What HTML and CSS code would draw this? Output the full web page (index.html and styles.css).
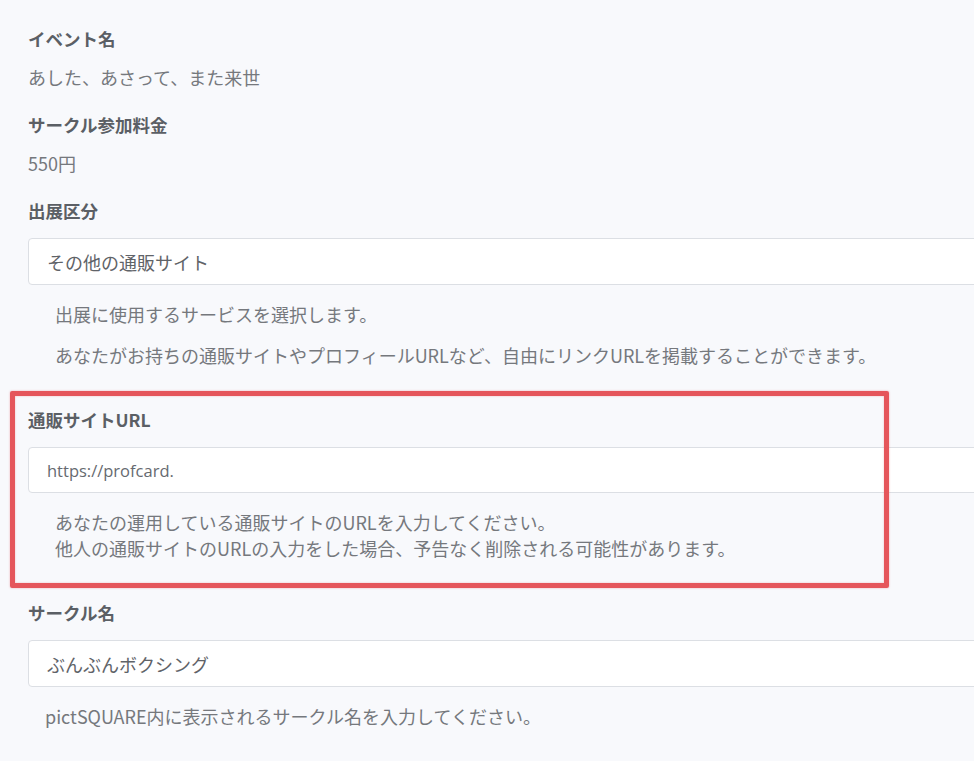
FILE: index.html
```html
<!DOCTYPE html>
<html lang="ja">
<head>
<meta charset="utf-8">
<link rel="stylesheet" href="styles.css">
</head>
<body>
<div class="page">
  <div class="field">
    <div class="label">イベント名</div>
    <div class="value">あした、あさって、また来世</div>
  </div>
  <div class="field">
    <div class="label">サークル参加料金</div>
    <div class="value">550円</div>
  </div>
  <div class="field">
    <div class="label">出展区分</div>
    <div class="input">その他の通販サイト</div>
    <div class="help">
      <p>出展に使用するサービスを選択します。</p>
      <p>あなたがお持ちの通販サイトやプロフィールURLなど、自由にリンクURLを掲載することができます。</p>
    </div>
  </div>
  <div class="field">
    <div class="label">通販サイトURL</div>
    <div class="input url">https://profcard.</div>
    <div class="help">
      <p>あなたの運用している通販サイトのURLを入力してください。<br>他人の通販サイトのURLの入力をした場合、予告なく削除される可能性があります。</p>
    </div>
  </div>
  <div class="field">
    <div class="label">サークル名</div>
    <div class="input">ぶんぶんボクシング</div>
    <div class="help narrow">
      <p>pictSQUARE内に表示されるサークル名を入力してください。</p>
    </div>
  </div>
  <div class="highlight"></div>
</div>
</body>
</html>
```
FILE: styles.css
```css
html, body {
  margin: 0;
  padding: 0;
  overflow: hidden;
}
body {
  background: #f8f9fc;
  font-family: "Noto Sans CJK JP", "Noto Sans", sans-serif;
  color: #777a7f;
  width: 974px;
  height: 761px;
}
.page {
  position: relative;
  padding: 26px 0 0 28px;
  border-left: 3px solid #eef0f3;
  margin-left: -3px;
}
.field {
  margin-bottom: 22px;
}
.label {
  font-size: 17.5px;
  font-weight: 700;
  line-height: 26px;
  color: #5b5f65;
  margin-bottom: 12px;
}
.label + .input {
  margin-top: 14px;
}
.value {
  font-size: 18px;
  line-height: 26px;
  color: #75787d;
}
.input {
  box-sizing: border-box;
  width: 980px;
  height: 47px;
  background: #fff;
  border: 1px solid #dcdfe4;
  border-radius: 4px;
  padding: 0 18px;
  display: flex;
  align-items: center;
  font-size: 18px;
  color: #5f6368;
}
.input.url {
  height: 46px;
  font-family: "Open Sans", "Noto Sans", sans-serif;
  font-size: 16.5px;
  color: #666a70;
}
.help {
  padding-top: 16px;
  padding-left: 27px;
  padding-bottom: 17px;
}
.help.narrow {
  padding-left: 17px;
}
.help p {
  margin: 0 0 15px;
  font-size: 18px;
  line-height: 26px;
  color: #75787d;
}
.help p:last-child {
  margin-bottom: 0;
}
.highlight {
  position: absolute;
  left: 10px;
  top: 391px;
  width: 879px;
  height: 197px;
  box-sizing: border-box;
  border: 5px solid #e5565b;
  border-radius: 2px;
  box-shadow: 0 0 2px rgba(229, 86, 91, 0.5), inset 0 0 2px rgba(229, 86, 91, 0.4);
}
```
